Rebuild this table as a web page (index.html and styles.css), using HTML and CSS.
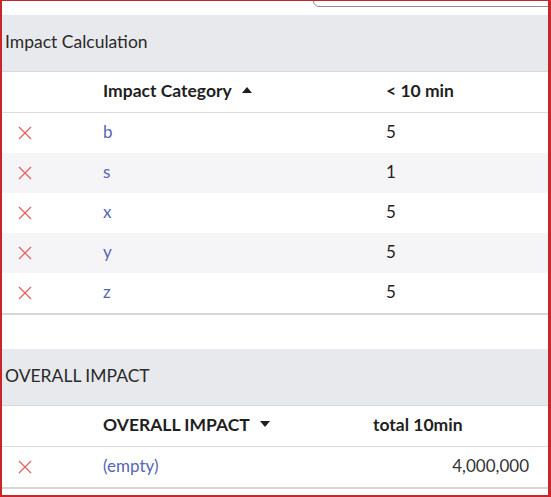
FILE: index.html
```html
<!DOCTYPE html>
<html>
<head>
<meta charset="utf-8">
<link rel="stylesheet" href="styles.css">
</head>
<body>
<div class="frame">
  <div class="topbar"><div class="search"></div></div>

  <section class="panel">
    <div class="panel-title"><span>Impact Calculation</span></div>
    <div class="table t1">
      <div class="row head">
        <span class="cell"></span>
        <span class="cell th">Impact Category <i class="caret up"></i></span>
        <span class="cell th">&lt; 10 min</span>
      </div>
      <div class="row">
        <span class="cell icon"><svg width="14" height="14" viewBox="0 0 14 14"><path d="M1 1L13 13M13 1L1 13"/></svg></span>
        <span class="cell link">b</span>
        <span class="cell">5</span>
      </div>
      <div class="row alt">
        <span class="cell icon"><svg width="14" height="14" viewBox="0 0 14 14"><path d="M1 1L13 13M13 1L1 13"/></svg></span>
        <span class="cell link">s</span>
        <span class="cell">1</span>
      </div>
      <div class="row">
        <span class="cell icon"><svg width="14" height="14" viewBox="0 0 14 14"><path d="M1 1L13 13M13 1L1 13"/></svg></span>
        <span class="cell link">x</span>
        <span class="cell">5</span>
      </div>
      <div class="row alt">
        <span class="cell icon"><svg width="14" height="14" viewBox="0 0 14 14"><path d="M1 1L13 13M13 1L1 13"/></svg></span>
        <span class="cell link">y</span>
        <span class="cell">5</span>
      </div>
      <div class="row last">
        <span class="cell icon"><svg width="14" height="14" viewBox="0 0 14 14"><path d="M1 1L13 13M13 1L1 13"/></svg></span>
        <span class="cell link">z</span>
        <span class="cell">5</span>
      </div>
    </div>
  </section>

  <div class="spacer"></div>

  <section class="panel">
    <div class="panel-title"><span>OVERALL IMPACT</span></div>
    <div class="table t2">
      <div class="row head">
        <span class="cell"></span>
        <span class="cell th">OVERALL IMPACT <i class="caret down"></i></span>
        <span class="cell th">total 10min</span>
      </div>
      <div class="row last">
        <span class="cell icon"><svg width="14" height="14" viewBox="0 0 14 14"><path d="M1 1L13 13M13 1L1 13"/></svg></span>
        <span class="cell link">(empty)</span>
        <span class="cell num">4,000,000</span>
      </div>
    </div>
  </section>
</div>
</body>
</html>
```

FILE: styles.css
```css
html, body {
  margin: 0;
  padding: 0;
  background: #fff;
}

body {
  font-family: Lato, "Open Sans", sans-serif;
  font-size: 17px;
  color: #222;
}

.frame {
  height: 497px;
  box-sizing: border-box;
  border-style: solid;
  border-color: #c9262b;
  border-width: 1px 3px 2px 2px;
  overflow: hidden;
}

.topbar {
  height: 14px;
  display: flex;
  overflow: hidden;
}

.search {
  flex: 1;
  margin-left: 311px;
  margin-right: -12px;
  margin-top: -8px;
  height: 12px;
  border: 1px solid #8c8c8c;
  border-radius: 6px;
}

.panel-title {
  height: 57px;
  box-sizing: border-box;
  background: #e8e9ec;
  display: flex;
  align-items: center;
  padding: 0 0 3px 3px;
  font-size: 17.5px;
  color: #2a2a2a;
  border-bottom: 1px solid #d7d8da;
}

.row {
  display: grid;
  height: 40px;
  align-items: center;
}

.cell {
  padding-bottom: 4px;
}

.t1 .row {
  grid-template-columns: 101px 283px 1fr;
}

.t2 .row {
  grid-template-columns: 101px 270px 1fr;
}

.row.head {
  border-bottom: 1px solid #dcdcdc;
}

.row.alt {
  background: #f5f5f7;
}

.row.last {
  border-bottom: 2px solid #d6d6d6;
}

.th {
  font-weight: bold;
  font-size: 17.5px;
  color: #1f1f1f;
  display: flex;
  align-items: center;
}

.icon {
  padding: 0 0 0 16px;
  display: flex;
  align-items: center;
}

.icon svg path {
  stroke: #e0625f;
  stroke-width: 1.3;
  fill: none;
}

.link {
  color: #5765b6;
}

.num {
  text-align: right;
  padding-right: 19px;
  color: #333;
}

.caret {
  display: inline-block;
  width: 0;
  height: 0;
  margin-left: 10px;
  border-left: 5px solid transparent;
  border-right: 5px solid transparent;
}

.caret.up {
  border-bottom: 6px solid #1f1f1f;
}

.caret.down {
  border-top: 6px solid #1f1f1f;
}

.spacer {
  height: 34px;
}
```
